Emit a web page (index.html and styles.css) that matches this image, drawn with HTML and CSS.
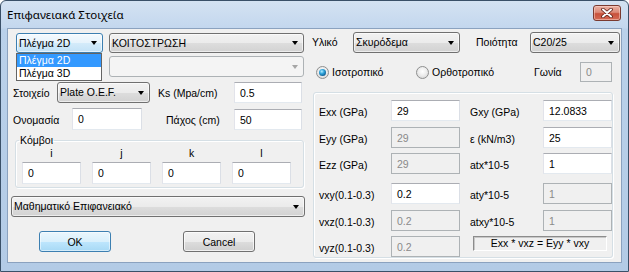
FILE: index.html
```html
<!DOCTYPE html>
<html lang="el">
<head>
<meta charset="utf-8">
<title>Επιφανειακά Στοιχεία</title>
<link rel="stylesheet" href="styles.css">
</head>
<body>
<div class="window">
  <div class="titlebar">
    <span class="title">Επιφανειακά Στοιχεία</span>
    <div class="close">
      <svg width="12" height="10" viewBox="0 0 12 10">
        <path d="M2 1.5 L10 8.5 M10 1.5 L2 8.5" stroke="#5c1f16" stroke-width="3.6" stroke-linecap="round"/>
        <path d="M2 1.5 L10 8.5 M10 1.5 L2 8.5" stroke="#ffffff" stroke-width="2" stroke-linecap="round"/>
      </svg>
    </div>
  </div>
  <div class="client">
    <div class="col col-left">
      <div class="r-mesh">
        <div class="combo combo-focus cb-mesh">
          <span class="cb-text">Πλέγμα 2D</span><span class="arrow"></span>
          <ul class="droplist">
            <li class="selected">Πλέγμα 2D</li>
            <li>Πλέγμα 3D</li>
          </ul>
        </div>
        <div class="combo cb-type"><span class="cb-text">ΚΟΙΤΟΣΤΡΩΣΗ</span><span class="arrow"></span></div>
      </div>
      <div class="r-sub">
        <div class="combo combo-disabled cb-type cb-sub"><span class="cb-text"></span><span class="arrow"></span></div>
      </div>
      <div class="r-elem">
        <span class="lbl">Στοιχείο</span>
        <div class="combo cb-plate"><span class="cb-text">Plate O.E.F.</span><span class="arrow"></span></div>
        <span class="lbl lbl-ks">Ks (Mpa/cm)</span>
        <div class="tb">0.5</div>
      </div>
      <div class="r-name">
        <span class="lbl">Ονομασία</span>
        <div class="tb tb-name">0</div>
        <span class="lbl lbl-thick">Πάχος (cm)</span>
        <div class="tb tb-thick">50</div>
      </div>
      <fieldset class="nodes">
        <legend>Κόμβοι</legend>
        <div class="nodes-grid">
          <span class="node-lbl">i</span>
          <span class="node-lbl">j</span>
          <span class="node-lbl">k</span>
          <span class="node-lbl">l</span>
          <div class="tb tb-node">0</div>
          <div class="tb tb-node">0</div>
          <div class="tb tb-node">0</div>
          <div class="tb tb-node">0</div>
        </div>
      </fieldset>
      <div class="combo cb-math"><span class="cb-text">Μαθηματικό Επιφανειακό</span><span class="arrow"></span></div>
      <div class="buttons">
        <button class="btn btn-default">OK</button>
        <button class="btn">Cancel</button>
      </div>
    </div>
    <div class="col col-right">
      <div class="r-mat">
        <span class="lbl">Υλικό</span>
        <div class="combo cb-mat"><span class="cb-text">Σκυρόδεμα</span><span class="arrow"></span></div>
        <span class="lbl lbl-quality">Ποιότητα</span>
        <div class="combo cb-quality"><span class="cb-text">C20/25</span><span class="arrow"></span></div>
      </div>
      <div class="r-radio">
        <span class="radio-item"><span class="radio checked"></span><span class="lbl">Ισοτροπικό</span></span>
        <span class="radio-item"><span class="radio"></span><span class="lbl">Ορθοτροπικό</span></span>
        <span class="lbl">Γωνία</span>
        <div class="tb tb-disabled tb-angle">0</div>
      </div>
      <div class="matgroup">
        <span class="lbl glbl">Exx (GPa)</span>
        <div class="tb">29</div>
        <span class="lbl glbl glbl2">Gxy (GPa)</span>
        <div class="tb">12.0833</div>

        <span class="lbl glbl">Eyy (GPa)</span>
        <div class="tb tb-disabled">29</div>
        <span class="lbl glbl glbl2">ε (kN/m3)</span>
        <div class="tb">25</div>

        <span class="lbl glbl">Ezz (GPa)</span>
        <div class="tb tb-disabled">29</div>
        <span class="lbl glbl glbl2">atx*10-5</span>
        <div class="tb">1</div>

        <span class="lbl glbl">vxy(0.1-0.3)</span>
        <div class="tb">0.2</div>
        <span class="lbl glbl glbl2">aty*10-5</span>
        <div class="tb tb-disabled">1</div>

        <span class="lbl glbl">vxz(0.1-0.3)</span>
        <div class="tb tb-disabled">0.2</div>
        <span class="lbl glbl glbl2">atxy*10-5</span>
        <div class="tb tb-disabled">1</div>

        <span class="lbl glbl">vyz(0.1-0.3)</span>
        <div class="tb tb-disabled">0.2</div>
        <div class="sunken">Exx * vxz = Eyy * vxy</div>
      </div>
    </div>
  </div>
</div>
</body>
</html>
```

FILE: styles.css
```css
* { box-sizing: border-box; }
html, body { margin: 0; padding: 0; }
body {
  width: 629px;
  height: 272px;
  overflow: hidden;
  background: #ffffff;
  font-family: "Liberation Sans", Arial, sans-serif;
  font-size: 10.5px;
  color: #000;
}

.window {
  width: 629px;
  height: 272px;
  border: 1px solid #3a5068;
  border-radius: 6px 6px 0 0;
  background: linear-gradient(to bottom, #d4e2f2 0, #c3d7ee 27px, #bad1ea 28px, #b3cbe6 100%);
  display: flex;
  flex-direction: column;
}

.titlebar {
  height: 27px;
  display: flex;
  align-items: flex-start;
}
.title {
  font-family: "Noto Sans", "Liberation Sans", sans-serif;
  font-size: 11.5px;
  line-height: 16px;
  padding: 6px 0 0 6px;
  color: #000;
}
.close {
  margin: 4px 7px 0 auto;
  width: 28px;
  height: 16px;
  border: 1px solid #7a3a30;
  border-radius: 3px;
  background: linear-gradient(to bottom, #eab1a4 0, #dc8a78 45%, #c8513b 55%, #d46a55 100%);
  box-shadow: inset 0 0 0 1px rgba(255, 220, 210, 0.5);
  display: flex;
  align-items: center;
  justify-content: center;
}

.client {
  margin: 0 6px;
  height: 235px;
  border: 1px solid #8ba2bf;
  background: #f0f0f0;
  display: flex;
}

.col { display: flex; flex-direction: column; }
.col-left { width: 300px; }
.col-right { width: 311px; }

.lbl { white-space: nowrap; line-height: 13px; }

/* combo boxes */
.combo {
  position: relative;
  display: flex;
  align-items: center;
  padding: 0 5px 0 2px;
  border: 1px solid #707070;
  border-radius: 3px;
  background: linear-gradient(to bottom, #f2f2f2 0, #ebebeb 50%, #dddddd 51%, #d2d2d2 100%);
  box-shadow: inset 0 0 0 1px rgba(255, 255, 255, 0.6);
  white-space: nowrap;
}
.cb-text { flex: 1; line-height: 13px; }
.arrow {
  width: 0;
  height: 0;
  border-left: 3.5px solid transparent;
  border-right: 3.5px solid transparent;
  border-top: 4px solid #000;
}
.combo-focus {
  border-color: #3c7fb1;
  background: linear-gradient(to bottom, #f4fafe 0, #e6f3fc 50%, #d4ebfa 51%, #c2e2f7 100%);
}
.combo-disabled {
  border-color: #adb2b5;
  background: #f4f4f4;
  box-shadow: none;
}
.combo-disabled .arrow { border-top-color: #a6a6a6; }

.droplist {
  position: absolute;
  left: -1px;
  top: calc(100% + 1px);
  width: 86px;
  margin: 0;
  padding: 0;
  list-style: none;
  border: 1px solid #646464;
  background: #fff;
  z-index: 5;
}
.droplist li {
  height: 13px;
  line-height: 13px;
  padding-left: 2px;
}
.droplist li.selected { background: #3399ff; color: #fff; }

/* text boxes */
.tb {
  height: 21px;
  display: flex;
  align-items: center;
  padding-left: 5px;
  background: #fff;
  border: 1px solid;
  border-color: #abadb3 #dbdfe6 #e3e9ef #e2e3ea;
  white-space: nowrap;
}
.tb-disabled {
  background: #f0f0f0;
  border-color: #adb2b5;
  color: #8a8a8a;
}

/* left column rows */
.r-mesh {
  margin-top: 4px;
  padding-left: 8px;
  display: flex;
  gap: 6px;
}
.cb-mesh { width: 87px; height: 20px; }
.cb-type { width: 195px; height: 20px; }
.r-sub { margin-top: 3px; padding-left: 101px; }
.cb-sub { height: 21px; }

.r-elem {
  margin-top: 5px;
  padding-left: 5px;
  display: grid;
  grid-template-columns: 44px 93px 84px 68px;
  align-items: center;
  height: 21px;
}
.cb-plate { height: 21px; }
.lbl-ks { padding-left: 8px; }

.r-name {
  margin-top: 5px;
  padding-left: 5px;
  display: grid;
  grid-template-columns: 59px 70px 92px 68px;
  align-items: center;
  height: 22px;
}
.tb-name { height: 22px; }
.tb-thick { align-self: end; }
.lbl-thick { padding-left: 24px; }
.r-elem .lbl, .r-name .lbl { padding-top: 2px; }

.nodes {
  margin: 4px 0 0 7px;
  width: 289px;
  padding: 0 3px 3px 3px;
  border: 1px solid #d5dfe5;
  border-radius: 3px;
  box-shadow: inset 1px 1px 0 #fff, 1px 1px 0 #fff;
  min-width: 0;
}
.nodes legend {
  padding: 0 1px;
  line-height: 13px;
}
.nodes-grid {
  margin-left: 3px;
  display: grid;
  grid-template-columns: repeat(4, 59px);
  column-gap: 11px;
  row-gap: 3px;
}
.node-lbl { text-align: center; line-height: 12px; }
.tb-node { height: 22px; }

.cb-math {
  margin: 8px 0 0 3px;
  width: 294px;
  height: 21px;
}

.buttons {
  margin-top: 14px;
  padding-left: 31px;
  display: flex;
  gap: 72px;
}
.btn {
  width: 72px;
  height: 21px;
  padding: 0;
  font: inherit;
  color: #000;
  border: 1px solid #707070;
  border-radius: 3px;
  background: linear-gradient(to bottom, #f2f2f2 0, #ebebeb 50%, #dddddd 51%, #cfcfcf 100%);
  box-shadow: inset 0 0 0 1px rgba(255, 255, 255, 0.7);
}
.btn-default {
  border-color: #3c7fb1;
  background: linear-gradient(to bottom, #eaf6fd 0, #d9f0fc 50%, #bee6fd 51%, #a7d9f5 100%);
  box-shadow: inset 0 0 0 1px rgba(255, 255, 255, 0.5);
}

/* right column */
.r-mat {
  margin-top: 3px;
  padding-left: 4px;
  display: grid;
  grid-template-columns: 41px 107px 70px 90px;
  align-items: center;
  height: 21px;
}
.cb-mat, .cb-quality { height: 21px; }
.lbl-quality { padding-left: 16px; }

.r-radio {
  margin-top: 9px;
  padding-left: 8px;
  display: grid;
  grid-template-columns: 100px 118px 46px 32px;
  align-items: center;
  height: 20px;
}
.radio-item { display: flex; align-items: center; gap: 3px; }
.radio {
  position: relative;
  width: 13px;
  height: 13px;
  border-radius: 50%;
  border: 1px solid #8e8f8f;
  background: radial-gradient(circle at 50% 40%, #ffffff 0, #eeeeee 45%, #cfcfcf 100%);
}
.radio.checked::after {
  content: "";
  position: absolute;
  left: 2px;
  top: 2px;
  width: 7px;
  height: 7px;
  border-radius: 50%;
  background: radial-gradient(circle at 40% 35%, #b6ecff 0, #33a7dd 35%, #0d5e94 75%, #0a3f68 100%);
}
.tb-angle { height: 20px; }

.matgroup {
  margin: 10px 0 0 5px;
  width: 300px;
  height: 166px;
  padding: 7px 0 0 5px;
  border: 1px solid #d5dfe5;
  border-radius: 3px;
  box-shadow: inset 1px 1px 0 #fff, 1px 1px 0 #fff;
  display: grid;
  grid-template-columns: 72px 69px 83px 69px;
  grid-template-rows: 27px 26px 30px 27px 26px 21px;
  align-items: start;
}
.glbl { line-height: 21px; padding-top: 2px; }
.glbl2 { padding-left: 10px; }
.sunken {
  grid-column: 3 / 5;
  margin-left: 13px;
  width: 134px;
  height: 15px;
  border: 1px solid;
  border-color: #8c8c8c #ffffff #ffffff #8c8c8c;
  box-shadow: inset 1px 1px 0 #c8c8c8;
  text-align: center;
  line-height: 13px;
  white-space: nowrap;
}
```
